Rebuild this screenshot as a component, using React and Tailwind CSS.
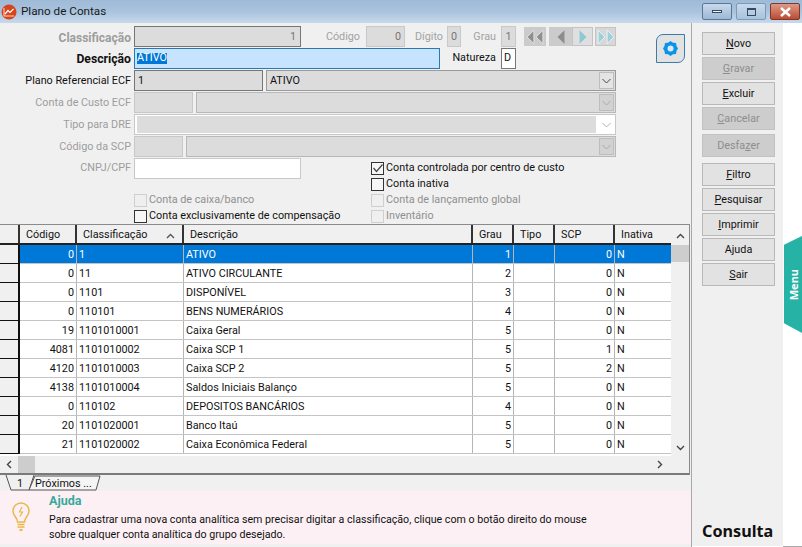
import React from "react";

const F = { fontFamily: 'Roboto, "Noto Sans", sans-serif' };
const N = { fontFamily: '"Noto Sans", sans-serif' };

const rows = [
  ["0", "1", "ATIVO", "1", "0"],
  ["0", "11", "ATIVO CIRCULANTE", "2", "0"],
  ["0", "1101", "DISPONÍVEL", "3", "0"],
  ["0", "110101", "BENS NUMERÁRIOS", "4", "0"],
  ["19", "1101010001", "Caixa Geral", "5", "0"],
  ["4081", "1101010002", "Caixa SCP 1", "5", "1"],
  ["4120", "1101010003", "Caixa SCP 2", "5", "2"],
  ["4138", "1101010004", "Saldos Iniciais Balanço", "5", "0"],
  ["0", "110102", "DEPOSITOS BANCÁRIOS", "4", "0"],
  ["20", "1101020001", "Banco Itaú", "5", "0"],
  ["21", "1101020002", "Caixa Econômica Federal", "5", "0"],
];

function Chevron({ disabled }) {
  return (
    <div className={`w-[15px] h-[17px] flex items-center justify-center ${disabled ? "bg-[#d2d2d2]" : "bg-[#e4e4e4]"} border border-[#bdbdbd]`}>
      <svg width="9" height="6" viewBox="0 0 9 6" fill="none" stroke={disabled ? "#a8a8a8" : "#444"} strokeWidth="1"><path d="M0.5 1 L4.5 5 L8.5 1" /></svg>
    </div>
  );
}

function T({ children }) {
  return <span className="pt-[2px]">{children}</span>;
}

function Box({ className = "", children }) {
  return <div className={`h-[21px] shrink-0 flex items-center text-[10.8px] leading-none ${className}`}>{children}</div>;
}

function Label({ w = "w-[134px]", className = "text-[#9d9d9d] text-[10.8px]", children }) {
  return <div className={`${w} shrink-0 text-right pr-[3px] pt-[2px] leading-none whitespace-nowrap ${className}`}>{children}</div>;
}

function Check({ checked, disabled, label }) {
  return (
    <div className={`flex items-center gap-[2px] h-4 text-[10.8px] leading-none whitespace-nowrap ${disabled ? "text-[#8f8f8f]" : "text-[#111]"}`}>
      <div className={`w-[13px] h-[13px] shrink-0 flex items-center justify-center border ${disabled ? "border-[#cfcfcf] bg-[#efefef]" : "border-[#333] bg-[#f6f6f6]"}`}>
        {checked && <svg width="10" height="9" viewBox="0 0 10 9" fill="none" stroke="#444" strokeWidth="1.2"><path d="M0.5 4 L3.5 7.5 L9.5 0.5" /></svg>}
      </div>
      <span>{label}</span>
    </div>
  );
}

function Tri({ dir, dbl, color, edge }) {
  const one = dir === "l" ? "M7 1 L1 7 L7 13 Z" : "M1 1 L7 7 L1 13 Z";
  const two = dir === "l" ? "M15 1 L9 7 L15 13 Z" : "M9 1 L15 7 L9 13 Z";
  return (
    <svg width={dbl ? 18 : 10} height="16" viewBox={dbl ? "0 0 16 14" : "0 0 8 14"}>
      <path d={one} fill={color} stroke={edge} strokeWidth="0.8" />
      {dbl && <path d={two} fill={color} stroke={edge} strokeWidth="0.8" />}
    </svg>
  );
}

function SideBtn({ u, pre = "", post = "", disabled, className = "" }) {
  return (
    <div className={`w-[73px] h-[23px] pt-[1px] flex items-center justify-center border text-[10.8px] leading-none ${disabled ? "bg-[#cdcdcd] border-[#c2c2c2] text-[#8d8d8d]" : "bg-[#e2e2e2] border-[#b8b8b8] text-[#111]"} ${className}`}>
      <span>{pre}<span className="underline">{u}</span>{post}</span>
    </div>
  );
}

const cell = "h-full flex items-center border-r border-[#b5b5b5] px-[2px] pt-[2px] shrink-0";

function Row({ r, sel }) {
  return (
    <div className={`flex h-[19px] shrink-0 text-[10.8px] leading-none ${sel ? "bg-[#0078d7] text-white" : "bg-white text-[#111]"} border-b border-[#c4c4c4]`}>
      <div className="w-[20px] h-[19px] self-start shrink-0 bg-[#f0f0f0] border-r-2 border-b border-[#111]" />
      <div className={`${cell} w-[57px] justify-end`}>{r[0]}</div>
      <div className={`${cell} w-[107px]`}>{r[1]}</div>
      <div className={`${cell} w-[289px]`}>{r[2]}</div>
      <div className={`${cell} w-[41px] justify-end`}>{r[3]}</div>
      <div className={`${cell} w-[41px]`} />
      <div className={`${cell} w-[60px] justify-end`}>{r[4]}</div>
      <div className="h-full flex items-center px-[2px] pt-[2px] flex-1">N</div>
    </div>
  );
}

function Hd({ w, children, extra }) {
  return (
    <div className={`${w} h-full shrink-0 flex items-center justify-between pl-[6px] pr-[2px] pt-[3px] border-r-2 border-[#333]`}>
      <span>{children}</span>{extra}
    </div>
  );
}

export default function App() {
  return (
    <div className="w-[802px] h-[547px] flex flex-col overflow-hidden bg-white relative" style={F}>
      {/* Title bar */}
      <div className="h-[23px] shrink-0 flex items-center bg-gradient-to-b from-[#9fbad7] via-[#a9c3de] to-[#c7d9ec]">
        <svg width="16" height="16" viewBox="0 0 16 16" className="ml-[1px]">
          <circle cx="8" cy="8" r="7.5" fill="#d8441c" />
          <path d="M3 4 V12 H13" fill="none" stroke="#fbd8c8" strokeWidth="1" />
          <path d="M4 10 L7 6.5 L9 8.5 L12.5 5" fill="none" stroke="#fff" strokeWidth="1.2" />
        </svg>
        <span className="ml-[4px] text-[11.7px] leading-none text-[#1a1a1a]">Plano de Contas</span>
        <div className="ml-auto mr-[2px] flex gap-[4px] items-center">
          <div className="w-[30px] h-[17px] border border-[#5a7896] rounded-[2px] bg-gradient-to-b from-[#c8d9ec] to-[#9db8d5] flex items-center justify-center">
            <div className="w-[10px] h-[3px] bg-[#f4f7fa] border border-[#344a60]" />
          </div>
          <div className="w-[30px] h-[17px] border border-[#7f9ab6] rounded-[2px] bg-gradient-to-b from-[#c8d9ec] to-[#a9c2dc] flex items-center justify-center">
            <div className="w-[9px] h-[8px] border border-[#344a60] border-t-2" />
          </div>
          <div className="w-[30px] h-[17px] border border-[#7d3a2c] rounded-[2px] bg-gradient-to-b from-[#dc9a88] to-[#bd4a32] flex items-center justify-center">
            <svg width="11" height="10" viewBox="0 0 11 10"><path d="M1 1 L10 9 M10 1 L1 9" stroke="#fff" strokeWidth="2.4" /></svg>
          </div>
        </div>
      </div>

      <div className="flex flex-1 min-h-0">
        {/* Main */}
        <div className="w-[692px] shrink-0 flex flex-col border-r border-[#a8a8a8] bg-[#f0f0f0]">
          {/* Form */}
          <div className="h-[201px] shrink-0 flex flex-col gap-[1px] pt-[3px] relative">
            <div className="flex items-center h-[21px]">
              <Label className="text-[#9d9d9d] font-bold text-[12px]">Classificação</Label>
              <Box className="w-[167px] bg-[#dcdcdc] border border-[#767676] justify-end pr-[4px] text-[#777]"><T>1</T></Box>
              <span className="w-[59px] shrink-0 text-right pt-[2px] text-[10.8px] leading-none text-[#a2a2a2]">Código</span>
              <Box className="ml-[6px] w-[39px] bg-[#dcdcdc] border border-[#c8c8c8] justify-end pr-[3px] text-[#777]"><T>0</T></Box>
              <span className="w-[38px] shrink-0 text-right pt-[2px] text-[10.8px] leading-none text-[#a2a2a2]">Dígito</span>
              <Box className="ml-[4px] w-[14px] bg-[#dcdcdc] border border-[#c8c8c8] justify-center text-[#777]"><T>0</T></Box>
              <span className="w-[35px] shrink-0 text-right pt-[2px] text-[10.8px] leading-none text-[#a2a2a2]">Grau</span>
              <Box className="ml-[5px] w-[15px] bg-[#dcdcdc] border border-[#c8c8c8] justify-center text-[#777]"><T>1</T></Box>
              <div className="ml-[8px] flex items-center h-[19px]">
                <div className="w-[22px] h-[19px] bg-[#cbcbcb] flex items-center justify-center"><Tri dir="l" dbl color="#8f8f8f" edge="#e6e6e6" /></div>
                <div className="ml-[3px] w-[23px] h-[19px] bg-[#cbcbcb] flex items-center justify-center"><Tri dir="l" color="#8c8c8c" /></div>
                <div className="w-[21px] h-[19px] bg-[#dfdfdf] border border-[#c4c4c4] flex items-center justify-center"><Tri dir="r" color="#8ec8d4" /></div>
                <div className="ml-[2px] w-[21px] h-[19px] bg-[#d7d7d7] border border-[#c4c4c4] flex items-center justify-center"><Tri dir="r" dbl color="#9ccfda" edge="#eef6f8" /></div>
              </div>
            </div>
            <div className="flex items-center h-[21px]">
              <Label className="text-[#111] font-bold text-[12.2px]">Descrição</Label>
              <div className="w-[306px] h-[21px] shrink-0 bg-[#c6e3ff] border border-[#2a7ab0] flex items-center pl-[2px] text-[10.8px] leading-none">
                <span className="bg-[#0078d7] text-white">ATIVO</span>
              </div>
              <span className="w-[56px] shrink-0 text-right text-[10.8px] leading-none text-[#111]">Natureza</span>
              <Box className="ml-[5px] w-[15px] bg-white border border-[#777] pl-[2px] text-[#111]">D</Box>
            </div>
            <div className="flex items-center h-[21px]">
              <Label className="text-[#111] text-[10.8px]">Plano Referencial ECF</Label>
              <Box className="w-[129px] bg-[#dcdcdc] border border-[#767676] pl-[3px] text-[#111]"><T>1</T></Box>
              <Box className="ml-[3px] w-[350px] bg-[#dcdcdc] border border-[#9a9a9a] pl-[3px] pr-[1px] justify-between text-[#111]"><T>ATIVO</T><Chevron /></Box>
            </div>
            <div className="flex items-center h-[21px]">
              <Label>Conta de Custo ECF</Label>
              <Box className="w-[59px] bg-[#dcdcdc] border border-[#c8c8c8]" />
              <Box className="ml-[3px] w-[420px] bg-[#dcdcdc] border border-[#b8b8b8] justify-end pr-[1px]"><Chevron disabled /></Box>
            </div>
            <div className="flex items-center h-[21px]">
              <Label>Tipo para DRE</Label>
              <Box className="w-[482px] bg-white border border-[#c8c8c8] pl-[2px] pr-[4px] justify-between">
                <div className="w-[459px] h-[17px] bg-[#dcdcdc]" />
                <svg width="9" height="6" viewBox="0 0 9 6" fill="none" stroke="#b0b0b0"><path d="M0.5 1 L4.5 5 L8.5 1" /></svg>
              </Box>
            </div>
            <div className="flex items-center h-[21px]">
              <Label>Código da SCP</Label>
              <Box className="w-[49px] bg-[#dcdcdc] border border-[#c8c8c8]" />
              <Box className="ml-[3px] w-[430px] bg-[#dcdcdc] border border-[#b8b8b8] justify-end pr-[1px]"><Chevron disabled /></Box>
            </div>
            <div className="flex items-start">
              <Label className="text-[#9d9d9d] text-[10.8px] pt-[5px]">CNPJ/CPF</Label>
              <div className="w-[167px] shrink-0">
                <div className="h-[21px] bg-white border border-[#c8c8c8]" />
                <div className="mt-[13px] flex flex-col">
                  <Check disabled label="Conta de caixa/banco" />
                  <Check label="Conta exclusivamente de compensação" />
                </div>
              </div>
              <div className="ml-[70px] mt-[2px] flex flex-col">
                <Check checked label="Conta controlada por centro de custo" />
                <Check label="Conta inativa" />
                <Check disabled label="Conta de lançamento global" />
                <Check disabled label="Inventário" />
              </div>
            </div>
            <div className="absolute left-[656px] top-[11px] w-[29px] h-[29px] bg-[#e2e2e2] border border-[#3a7cae] rounded-tl-[7px] rounded-br-[7px] flex items-center justify-center">
              <svg width="17" height="17" viewBox="0 0 17 17">
                <path d="M8.5 1 L11 2.7 L14 2.9 L14.5 5.9 L16 8.5 L14.5 11.1 L14 14.1 L11 14.3 L8.5 16 L6 14.3 L3 14.1 L2.5 11.1 L1 8.5 L2.5 5.9 L3 2.9 L6 2.7 Z" fill="#0a93ea" />
                <circle cx="8.5" cy="8.5" r="3" fill="#dfe9f0" />
              </svg>
            </div>
          </div>

          {/* Grid */}
          <div className="h-[251px] shrink-0 w-[690px] border-t border-[#8a8a8a] border-r border-b-2 border-b-[#7a7a7a] border-r-[#8a8a8a] flex flex-col bg-[#f0f0f0]">
            <div className="flex flex-1 min-h-0">
              <div className="w-[671px] shrink-0 flex flex-col overflow-hidden bg-white">
                <div className="flex h-[20px] shrink-0 text-[10.8px] leading-none text-[#111] bg-[#f0f0f0] border-b-2 border-[#222]">
                  <div className="w-[20px] h-full shrink-0 border-r-2 border-[#333]" />
                  <Hd w="w-[57px]">Código</Hd>
                  <Hd w="w-[107px]" extra={<svg width="9" height="6" viewBox="0 0 9 6" className="mr-[5px]" fill="none" stroke="#555" strokeWidth="1.4"><path d="M1 5 L4.5 1.5 L8 5" /></svg>}>Classificação</Hd>
                  <Hd w="w-[289px]">Descrição</Hd>
                  <Hd w="w-[41px]">Grau</Hd>
                  <Hd w="w-[41px]">Tipo</Hd>
                  <Hd w="w-[60px]">SCP</Hd>
                  <div className="flex-1 h-full flex items-center pl-[6px] pt-[3px]">Inativa</div>
                </div>
                {rows.map((r, i) => <Row key={i} r={r} sel={i === 0} />)}
              </div>
              <div className="flex-1 flex flex-col items-center">
                <svg width="9" height="6" viewBox="0 0 9 6" className="mt-[8px]" fill="none" stroke="#444" strokeWidth="1.4"><path d="M1 5 L4.5 1.5 L8 5" /></svg>
                <div className="w-full h-[17px] mt-[6px] bg-[#cdcdcd]" />
                <svg width="9" height="6" viewBox="0 0 9 6" className="mt-auto mb-[5px]" fill="none" stroke="#444" strokeWidth="1.4"><path d="M1 1 L4.5 4.5 L8 1" /></svg>
              </div>
            </div>
            <div className="h-[17px] shrink-0 flex items-center bg-[#f0f0f0] pl-[6px] pr-[26px]">
              <svg width="6" height="9" viewBox="0 0 6 9" fill="none" stroke="#444" strokeWidth="1.4"><path d="M5 1 L1.5 4.5 L5 8" /></svg>
              <div className="ml-[6px] w-[17px] h-[17px] bg-[#cdcdcd]" />
              <svg width="6" height="9" viewBox="0 0 6 9" className="ml-auto" fill="none" stroke="#444" strokeWidth="1.4"><path d="M1 1 L4.5 4.5 L1 8" /></svg>
            </div>
          </div>

          {/* Tabs */}
          <div className="h-[16px] shrink-0 pt-[2px] relative flex items-center text-[10.8px] leading-none text-[#111] bg-[#f0f0f0]">
            <svg width="104" height="16" viewBox="0 0 104 16" className="absolute left-0 top-0" fill="none">
              <path d="M6 0 L11 15 H29 L34 0" stroke="#555" />
              <path d="M29 15 L35 1 H100 L96 15 H29" stroke="#555" fill="#f5f5f5" />
            </svg>
            <span className="relative ml-[17px] w-[18px]">1</span>
            <span className="relative">Próximos ...</span>
          </div>

          {/* Help */}
          <div className="flex-1 min-h-0 flex bg-[#fcf0f4] mb-[3px]">
            <svg width="18" height="30" viewBox="0 0 18 30" className="ml-[12px] mt-[11px] shrink-0" fill="none" stroke="#e8b84a" strokeWidth="1.5">
              <path d="M5.5 20 C5.5 15.5 1 14 1 9 C1 4.5 4.5 1 9 1 C13.5 1 17 4.5 17 9 C17 14 12.5 15.5 12.5 20 Z" />
              <path d="M10 5 L7.5 10 H10.5 L8 14.5" strokeWidth="1.2" />
              <path d="M5.5 22.5 H12.5 M5.5 25 H12.5" strokeWidth="1.6" />
              <path d="M7.5 28 H10.5" strokeWidth="2" />
            </svg>
            <div className="ml-[19px] flex flex-col text-[10.65px] text-[#111] whitespace-nowrap">
              <div className="mt-[4px] h-[13px] font-bold text-[#37a99d] leading-none text-[12.5px]">Ajuda</div>
              <div className="leading-[15px] mt-[4px]">Para cadastrar uma nova conta analítica sem precisar digitar a classificação, clique com o botão direito do mouse</div>
              <div className="leading-[15px]">sobre qualquer conta analítica do grupo desejado.</div>
            </div>
          </div>
        </div>

        {/* Side */}
        <div className="w-[91px] shrink-0 bg-[#f0f0f0] flex flex-col items-start pt-[9px] mb-[1px] pl-[10px]">
          <div className="flex flex-col gap-[2px]">
            <SideBtn u="N" post="ovo" />
            <SideBtn u="G" post="ravar" disabled />
            <SideBtn u="E" post="xcluir" />
            <SideBtn u="C" post="ancelar" disabled />
            <SideBtn pre="Desfa" u="z" post="er" disabled className="mt-[2px]" />
          </div>
          <div className="flex flex-col gap-[2px] mt-[6px]">
            <SideBtn u="F" post="iltro" />
            <SideBtn u="P" post="esquisar" />
            <SideBtn u="I" post="mprimir" />
            <SideBtn pre="A" u="j" post="uda" />
            <SideBtn u="S" post="air" />
          </div>
          <div className="mt-auto mb-[7px] text-[16.2px] leading-none font-bold text-[#111]" style={N}>Consulta</div>
        </div>

        {/* Far right */}
        <div className="flex-1 relative border-b border-[#aaaaaa]">
          <div className="absolute left-[1px] top-[213px] w-[18px] h-[97px] bg-[#26b3a6] [clip-path:polygon(0_9%,100%_0,100%_100%,0_90%)] flex items-center justify-center">
            <span className="text-white font-bold text-[11px] leading-none [writing-mode:vertical-rl] rotate-180" style={N}>Menu</span>
          </div>
        </div>
      </div>
    </div>
  );
}
